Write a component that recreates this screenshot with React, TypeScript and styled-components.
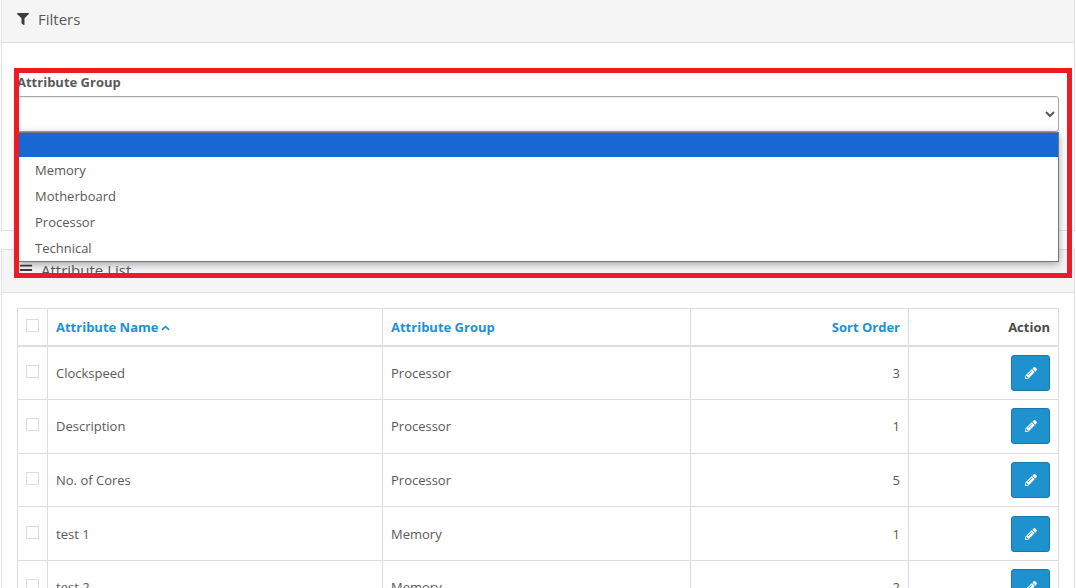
import React from 'react';
import styled, { createGlobalStyle } from 'styled-components';
import { FaBars, FaFilter, FaPencilAlt } from 'react-icons/fa';

const attributes = [
    { name: 'Clockspeed', group: 'Processor', order: 3 },
    { name: 'Description', group: 'Processor', order: 1 },
    { name: 'No. of Cores', group: 'Processor', order: 5 },
    { name: 'test 1', group: 'Memory', order: 1 },
    { name: 'test 2', group: 'Memory', order: 2 },
];

const groupOptions = ['', 'Memory', 'Motherboard', 'Processor', 'Technical'];

const App: React.FunctionComponent = () => (
    <Page>
        <GlobalStyle />
        <Panel>
            <PanelHeading>
                <FaFilter size={12} />
                <PanelTitle>Filters</PanelTitle>
            </PanelHeading>
            <FilterBody>
                <FieldLabel>Attribute Group</FieldLabel>
                <GroupSelect defaultValue="">
                    <option value=""></option>
                </GroupSelect>
            </FilterBody>
        </Panel>
        <ListPanel>
            <ListHeading>
                <FaBars size={14} />
                <ListTitle>Attribute List</ListTitle>
            </ListHeading>
            <ListBody>
                <Table>
                    <colgroup>
                        <col width={30} />
                        <col width={335} />
                        <col width={308} />
                        <col width={218} />
                        <col width={150} />
                    </colgroup>
                    <thead>
                        <tr>
                            <HeadCell>
                                <Tick type="checkbox" />
                            </HeadCell>
                            <HeadCell>
                                <SortLink href="#">
                                    Attribute Name
                                    <SortCaret viewBox="0 0 10 6">
                                        <path d="M1 5l4-3.6L9 5" />
                                    </SortCaret>
                                </SortLink>
                            </HeadCell>
                            <HeadCell>
                                <SortLink href="#">Attribute Group</SortLink>
                            </HeadCell>
                            <HeadCell $right>
                                <SortLink href="#">Sort Order</SortLink>
                            </HeadCell>
                            <HeadCell $right>Action</HeadCell>
                        </tr>
                    </thead>
                    <tbody>
                        {attributes.map((attribute) => (
                            <tr key={attribute.name}>
                                <Cell>
                                    <Tick type="checkbox" />
                                </Cell>
                                <Cell>{attribute.name}</Cell>
                                <Cell>{attribute.group}</Cell>
                                <Cell $right>{attribute.order}</Cell>
                                <Cell $right>
                                    <EditButton type="button">
                                        <FaPencilAlt size={12} />
                                    </EditButton>
                                </Cell>
                            </tr>
                        ))}
                    </tbody>
                </Table>
            </ListBody>
        </ListPanel>
        <OptionList>
            {groupOptions.map((option) => (
                <OptionItem key={option} $selected={option === ''}>
                    {option}
                </OptionItem>
            ))}
        </OptionList>
        <Highlight />
    </Page>
);

export default App;

const GlobalStyle = createGlobalStyle`
    html, body {
        margin: 0;
        height: 588px;
        overflow: hidden;
        background: #fff;
    }
`;

const Page = styled.div`
    position: relative;
    height: 588px;
    overflow: hidden;
    padding: 0 1px;
    box-sizing: border-box;
    font-family: 'Open Sans', sans-serif;
    font-size: 13px;
    color: #595959;
`;

const Panel = styled.section`
    margin-top: -5px;
    border: 1px solid #e0e0e0;
    border-top: 0;
    height: 236px;
    box-sizing: border-box;
`;

const ListPanel = styled(Panel)`
    height: auto;
    margin-top: 18px;
    border-top: 1px solid #e0e0e0;
`;

const PanelHeading = styled.header`
    display: flex;
    align-items: center;
    height: 48px;
    padding: 0 15px;
    box-sizing: border-box;
    background: #f5f5f5;
    border-bottom: 1px solid #e0e0e0;
    color: #3d3d3d;
`;

const ListHeading = styled(PanelHeading)`
    height: 43px;
    padding: 0 15px 2px 17px;
`;

const PanelTitle = styled.span`
    margin-left: 9px;
    font-size: 15px;
    color: #595959;
`;

const ListTitle = styled(PanelTitle)`
    margin-left: 8px;
`;

const FilterBody = styled.div`
    padding: 30px 15px 0;
`;

const FieldLabel = styled.label`
    display: block;
    height: 23px;
    line-height: 18px;
    font-weight: 700;
    color: #595959;
`;

const GroupSelect = styled.select`
    display: block;
    width: 100%;
    height: 36px;
    box-sizing: border-box;
    border: 1px solid #a8a8a8;
    border-radius: 3px;
    background: #fff;
    box-shadow: inset 0 1px 1px rgba(0, 0, 0, 0.075);
    font: inherit;
    color: #595959;
`;

const ListBody = styled.div`
    padding: 15px;
`;

const Table = styled.table`
    width: 100%;
    table-layout: fixed;
    border-collapse: collapse;
`;

const HeadCell = styled.td<{ $right?: boolean }>`
    height: 37.5px;
    padding: 0 8px;
    box-sizing: border-box;
    border: 1px solid #ddd;
    border-bottom-width: 2px;
    text-align: ${({ $right }) => ($right ? 'right' : 'left')};
    font-weight: 700;
    color: #4a4a4a;
`;

const Cell = styled.td<{ $right?: boolean }>`
    height: 53.6px;
    padding: 0 8px;
    box-sizing: border-box;
    border: 1px solid #ddd;
    text-align: ${({ $right }) => ($right ? 'right' : 'left')};
`;

const SortLink = styled.a`
    color: #1e91cf;
    text-decoration: none;
`;

const SortCaret = styled.svg`
    width: 9px;
    height: 6px;
    margin-left: 3px;
    vertical-align: 1px;
    fill: none;
    stroke: #1e91cf;
    stroke-width: 1.8;
`;

const Tick = styled.input`
    display: block;
    appearance: none;
    width: 13px;
    height: 13px;
    margin: 0 0 3px;
    border: 1px solid #ddd;
    background: #fff;
`;

const EditButton = styled.button`
    display: inline-flex;
    align-items: center;
    justify-content: center;
    vertical-align: middle;
    width: 39px;
    height: 36px;
    padding: 0;
    border: 1px solid #1978ab;
    border-radius: 3px;
    background: #1e91cf;
    color: #fff;
`;

const OptionList = styled.ul`
    position: absolute;
    top: 132px;
    left: 18px;
    width: 1041px;
    height: 130px;
    margin: 0;
    padding: 0;
    box-sizing: border-box;
    list-style: none;
    background: #fff;
    border: 1px solid #767676;
    box-shadow: 0 2px 8px rgba(0, 0, 0, 0.35);
`;

const OptionItem = styled.li<{ $selected: boolean }>`
    height: ${({ $selected }) => ($selected ? '24px' : '26px')};
    line-height: 26px;
    padding-left: 16px;
    background: ${({ $selected }) => ($selected ? '#1967d2' : 'transparent')};
`;

const Highlight = styled.div`
    position: absolute;
    top: 68px;
    left: 14px;
    width: 1058px;
    height: 210px;
    box-sizing: border-box;
    border: 5px solid #ed1c24;
    pointer-events: none;
`;
